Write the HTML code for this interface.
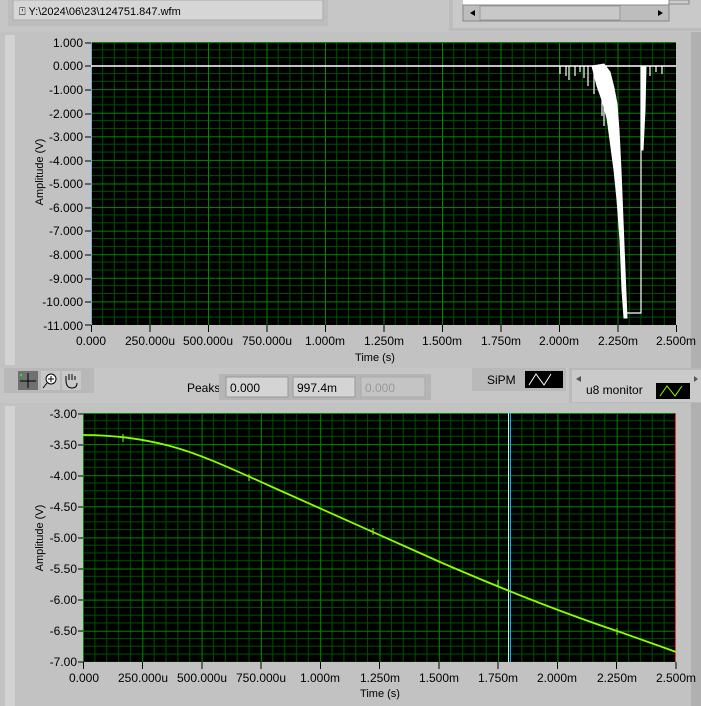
<!DOCTYPE html>
<html><head><meta charset="utf-8"><style>
html,body{margin:0;padding:0;background:#c6c6c6;overflow:hidden}
svg{display:block;font-family:"Liberation Sans",sans-serif}
</style></head><body>
<svg width="701" height="706" viewBox="0 0 701 706" xmlns="http://www.w3.org/2000/svg">
<defs>
<pattern id="g1" x="91" y="42" width="58.5" height="23.58" patternUnits="userSpaceOnUse">
<rect width="58.5" height="23.58" fill="#000"/>
<g stroke="#005000" stroke-width="1">
<line x1="11.7" y1="0" x2="11.7" y2="24"/><line x1="23.4" y1="0" x2="23.4" y2="24"/><line x1="35.1" y1="0" x2="35.1" y2="24"/><line x1="46.8" y1="0" x2="46.8" y2="24"/>
<line x1="0" y1="7.86" x2="59" y2="7.86"/><line x1="0" y1="15.72" x2="59" y2="15.72"/>
</g>
<g stroke="#008800" stroke-width="1"><line x1="0.5" y1="0" x2="0.5" y2="24"/><line x1="0" y1="0.5" x2="59" y2="0.5"/></g>
</pattern>
<pattern id="g2" x="83" y="413" width="59.3" height="31.1" patternUnits="userSpaceOnUse">
<rect width="59.3" height="31.1" fill="#000"/>
<g stroke="#005000" stroke-width="1">
<line x1="11.86" y1="0" x2="11.86" y2="32"/><line x1="23.72" y1="0" x2="23.72" y2="32"/><line x1="35.58" y1="0" x2="35.58" y2="32"/><line x1="47.44" y1="0" x2="47.44" y2="32"/>
<line x1="0" y1="7.78" x2="60" y2="7.78"/><line x1="0" y1="15.55" x2="60" y2="15.55"/><line x1="0" y1="23.33" x2="60" y2="23.33"/>
</g>
<g stroke="#008800" stroke-width="1"><line x1="0.5" y1="0" x2="0.5" y2="32"/><line x1="0" y1="0.5" x2="60" y2="0.5"/></g>
</pattern>
</defs>
<rect width="701" height="706" fill="#c6c6c6"/>
<rect x="8" y="0" width="320" height="26" fill="#bdbdbd"/>
<rect x="13" y="0" width="310" height="20" fill="#d6d6d6" stroke="#aaa"/>
<text x="19" y="15" font-size="11" fill="#000">⍞ Y:\2024\06\23\124751.847.wfm</text>
<rect x="449" y="0" width="252" height="31" fill="#bcbcbc"/>
<rect x="453" y="0" width="248" height="28" fill="#c9c9c9"/>
<rect x="463" y="0" width="206" height="5" fill="#fff"/>
<rect x="463" y="5" width="206" height="16" fill="#bdbdbd" stroke="#888"/>
<rect x="480" y="6" width="140" height="14" fill="#c8c8c8" stroke="#999"/>
<path d="M470 13 l5 -3 v6z" fill="#000"/><path d="M663 13 l-5 -3 v6z" fill="#000"/>
<rect x="669" y="0" width="20" height="4" fill="#ccc" stroke="#888"/>
<rect x="0" y="32" width="701" height="336" fill="#c2c2c2"/>
<rect x="5" y="35" width="10" height="330" fill="#d3d3d3"/>
<rect x="691" y="32" width="10" height="336" fill="#b0b0b0"/>
<rect x="91" y="42" width="585" height="283" fill="url(#g1)"/>
<line x1="91.5" y1="42" x2="91.5" y2="325" stroke="#7ad" stroke-width="1"/>
<g font-size="12" text-anchor="end" fill="#000">
<text x="83" y="47">1.000</text><text x="83" y="70">0.000</text><text x="83" y="94">-1.000</text><text x="83" y="118">-2.000</text><text x="83" y="141">-3.000</text><text x="83" y="165">-4.000</text><text x="83" y="188">-5.000</text><text x="83" y="212">-6.000</text><text x="83" y="235">-7.000</text><text x="83" y="259">-8.000</text><text x="83" y="283">-9.000</text><text x="83" y="306">-10.000</text><text x="83" y="330">-11.000</text>
</g>
<g stroke="#000"><path d="M85 43h6M85 66h6M85 90h6M85 114h6M85 137h6M85 161h6M85 184h6M85 208h6M85 231h6M85 255h6M85 279h6M85 302h6M85 325h6"/>
<path d="M91.5 325v7M150 325v7M208.5 325v7M267 325v7M325.5 325v7M384 325v7M442.5 325v7M501 325v7M559.5 325v7M618 325v7M676.5 325v7"/></g>
<g font-size="12" text-anchor="middle" fill="#000">
<text x="91" y="345">0.000</text><text x="150" y="345">250.000u</text><text x="208" y="345">500.000u</text><text x="267" y="345">750.000u</text><text x="325" y="345">1.000m</text><text x="384" y="345">1.250m</text><text x="442" y="345">1.500m</text><text x="501" y="345">1.750m</text><text x="559" y="345">2.000m</text><text x="618" y="345">2.250m</text><text x="676" y="345">2.500m</text>
<text x="375" y="361" font-size="11">Time (s)</text>
<text transform="translate(43 172) rotate(-90)" font-size="11">Amplitude (V)</text>
</g>
<g stroke="#fff" fill="#fff">
<line x1="91" y1="66" x2="676" y2="66" stroke-width="1.5"/>
<path d="M560 66v8M566 66v10M569 66v14M575 66v10M580 66v6M584 66v12M588 66v20M594 66v28M598 66v22M602 66v50M604 66v60M650 66v10M656 66v6M662 66v8" stroke-width="1.2"/>
<path d="M592 66 L604 64 L610 72 L614 88 L617 104 L619 130 L621 170 L623 220 L625 270 L627 318 L624 318 L622 290 L620 240 L617 200 L614 170 L610 140 L607 118 L602 100 L597 86Z"/>
<path d="M627 313 H641 V66" stroke-width="1.2" fill="none"/>
<path d="M642 66 L646 66 L645 110 L643 150 L642 150Z"/>
</g>
<rect x="0" y="368" width="701" height="35" fill="#c6c6c6"/>
<rect x="4" y="368" width="90" height="25" fill="#b8b8b8"/>
<rect x="18" y="371" width="20" height="19" fill="#707070"/>
<path d="M28 373v15M20 381h16" stroke="#000"/><rect x="20" y="374" width="2" height="2" fill="#0f0"/>
<rect x="41" y="371" width="19" height="19" fill="#c8c8c8"/>
<circle cx="51" cy="379" r="5" fill="#fff" stroke="#000"/><path d="M48 379h6M51 376v6M47 383l-4 5" stroke="#000"/>
<rect x="62" y="371" width="19" height="19" fill="#c8c8c8"/>
<path d="M66 380v-4M69 380v-6M72 380v-6M75 380v-4M66 380q0 8 6 8q5 0 5 -5" stroke="#000" fill="none"/>
<text x="187" y="392" font-size="12" fill="#000">Peaks</text>
<rect x="219" y="374" width="212" height="26" fill="#b5b5b5"/>
<rect x="226" y="377" width="62" height="20" fill="#d4d4d4" stroke="#999"/><text x="230" y="392" font-size="12">0.000</text>
<rect x="293" y="377" width="62" height="20" fill="#d4d4d4" stroke="#999"/><text x="297" y="392" font-size="12">997.4m</text>
<rect x="361" y="377" width="64" height="20" fill="#c4c4c4" stroke="#aaa"/><text x="365" y="392" font-size="12" fill="#999">0.000</text>
<rect x="472" y="368" width="94" height="23" fill="#b9b9b9"/>
<text x="487" y="384" font-size="12">SiPM</text>
<rect x="525" y="371" width="38" height="17" fill="#000"/><path d="M529 385l7 -11l8 11l7 -11" stroke="#fff" fill="none"/>
<rect x="569" y="368" width="132" height="35" fill="#b9b9b9"/>
<rect x="572" y="370" width="129" height="32" fill="#cacaca"/>
<path d="M576 379l5 -3v6z" fill="#555"/><path d="M698 379l-4 -3v6z" fill="#555"/>
<text x="586" y="394" font-size="12">u8 monitor</text>
<rect x="656" y="383" width="34" height="16" fill="#000"/><path d="M660 396l7 -10l8 10l7 -10" stroke="#8f0" fill="none"/>
<rect x="0" y="403" width="701" height="303" fill="#c2c2c2"/>
<rect x="5" y="406" width="10" height="300" fill="#d3d3d3"/>
<rect x="691" y="403" width="10" height="303" fill="#b0b0b0"/>
<rect x="83" y="413" width="593" height="249" fill="url(#g2)"/>
<line x1="675.5" y1="413" x2="675.5" y2="662" stroke="#e33"/>
<g font-size="12" text-anchor="end"><text x="77" y="418">-3.00</text><text x="77" y="449">-3.50</text><text x="77" y="480">-4.00</text><text x="77" y="511">-4.50</text><text x="77" y="542">-5.00</text><text x="77" y="573">-5.50</text><text x="77" y="604">-6.00</text><text x="77" y="635">-6.50</text><text x="77" y="666">-7.00</text></g>
<g stroke="#000"><path d="M78 414h5M78 445h5M78 476h5M78 507h5M78 538h5M78 569h5M78 600h5M78 631h5M78 662h5"/>
<path d="M83.5 662v7M142.5 662v7M202 662v7M261 662v7M320.5 662v7M379.5 662v7M439 662v7M498 662v7M557.5 662v7M616.5 662v7M676 662v7"/></g>
<g font-size="12" text-anchor="middle">
<text x="84" y="682">0.000</text><text x="143" y="682">250.000u</text><text x="202" y="682">500.000u</text><text x="261" y="682">750.000u</text><text x="320" y="682">1.000m</text><text x="380" y="682">1.250m</text><text x="439" y="682">1.500m</text><text x="498" y="682">1.750m</text><text x="557" y="682">2.000m</text><text x="617" y="682">2.250m</text><text x="676" y="682">2.500m</text>
<text x="380" y="697" font-size="11">Time (s)</text>
<text transform="translate(43 538) rotate(-90)" font-size="11">Amplitude (V)</text>
</g>
<line x1="508.5" y1="413" x2="508.5" y2="662" stroke="#bff" />
<line x1="510.5" y1="413" x2="510.5" y2="662" stroke="#39f"/>
<path d="M83 435 C110 435 140 438 170 446 C200 454 230 468 270 486 C320 508 380 535 440 562 C500 588 560 612 620 632 C645 641 660 646 676 652" stroke="#8f0" stroke-width="1.8" fill="none"/>
<path d="M123 434v8M249 474v7M373 528v7M498 580v7M617 628v7" stroke="#8f0"/>
</svg>
</body></html>
